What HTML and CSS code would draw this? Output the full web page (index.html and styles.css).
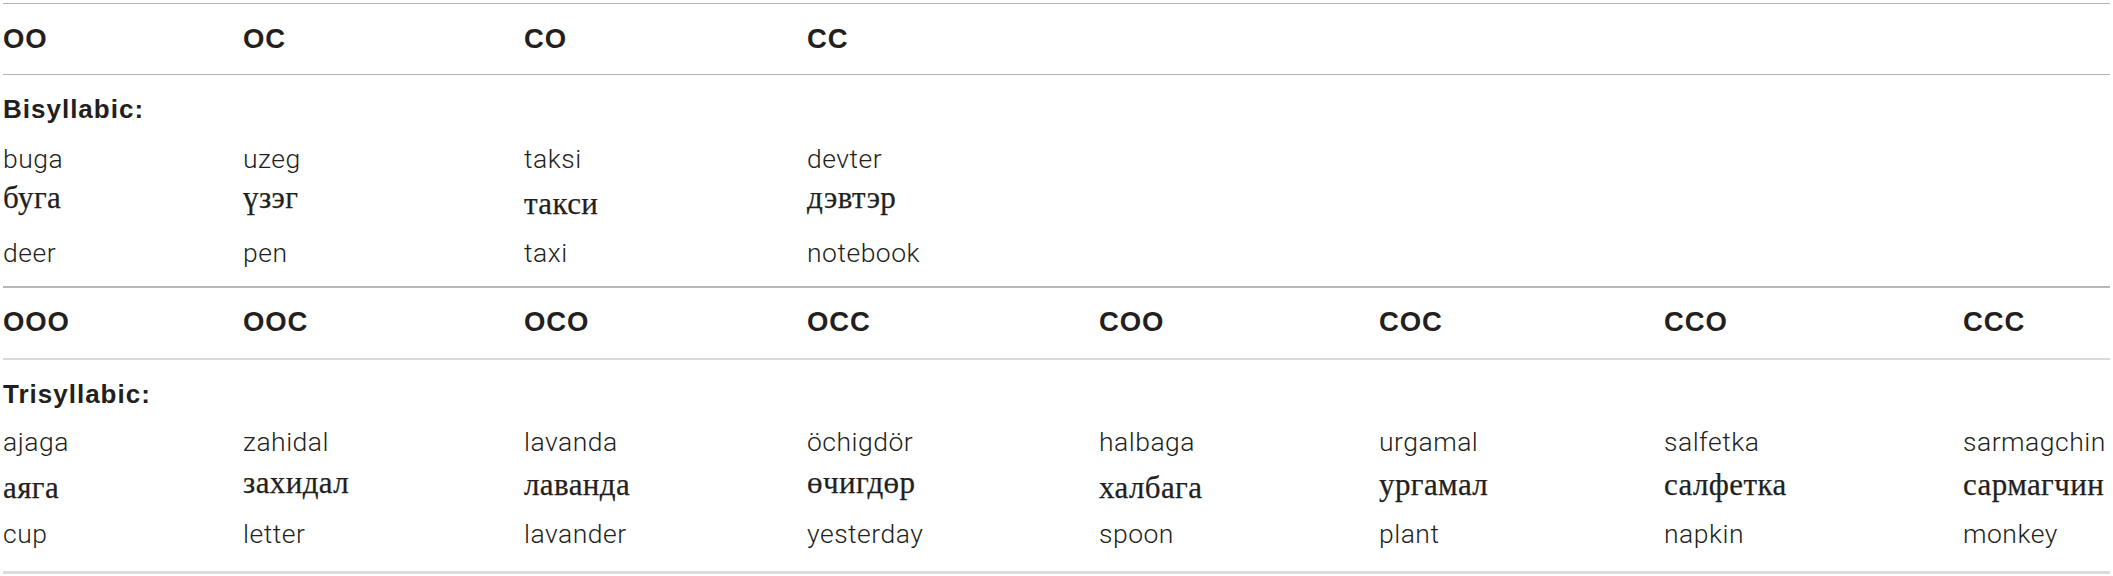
FILE: index.html
```html
<!DOCTYPE html>
<html lang="en">
<head>
<meta charset="utf-8">
<title>Syllable structure stimuli</title>
<link rel="stylesheet" href="styles.css">
</head>
<body>
<div class="table">
  <section class="block block-bi">
    <div class="row row-head">
      <div class="cell">OO</div>
      <div class="cell">OC</div>
      <div class="cell">CO</div>
      <div class="cell">CC</div>
    </div>
    <div class="row row-label">
      <div class="cell cell-wide">Bisyllabic:</div>
    </div>
    <div class="row row-lat">
      <div class="cell">buga</div>
      <div class="cell">uzeg</div>
      <div class="cell">taksi</div>
      <div class="cell">devter</div>
    </div>
    <div class="row row-cyr">
      <div class="cell">буга</div>
      <div class="cell">үзэг</div>
      <div class="cell shift-6">такси</div>
      <div class="cell">дэвтэр</div>
    </div>
    <div class="row row-lat row-gloss">
      <div class="cell">deer</div>
      <div class="cell">pen</div>
      <div class="cell">taxi</div>
      <div class="cell">notebook</div>
    </div>
  </section>
  <section class="block block-tri">
    <div class="row row-head">
      <div class="cell">OOO</div>
      <div class="cell">OOC</div>
      <div class="cell">OCO</div>
      <div class="cell">OCC</div>
      <div class="cell">COO</div>
      <div class="cell">COC</div>
      <div class="cell">CCO</div>
      <div class="cell">CCC</div>
    </div>
    <div class="row row-label">
      <div class="cell cell-wide">Trisyllabic:</div>
    </div>
    <div class="row row-lat">
      <div class="cell">ajaga</div>
      <div class="cell">zahidal</div>
      <div class="cell">lavanda</div>
      <div class="cell">öchigdör</div>
      <div class="cell">halbaga</div>
      <div class="cell">urgamal</div>
      <div class="cell">salfetka</div>
      <div class="cell">sarmagchin</div>
    </div>
    <div class="row row-cyr">
      <div class="cell shift-5">аяга</div>
      <div class="cell">захидал</div>
      <div class="cell shift-2">лаванда</div>
      <div class="cell">өчигдөр</div>
      <div class="cell shift-5">халбага</div>
      <div class="cell shift-2">ургамал</div>
      <div class="cell shift-2">салфетка</div>
      <div class="cell shift-2">сармагчин</div>
    </div>
    <div class="row row-lat row-gloss">
      <div class="cell">cup</div>
      <div class="cell">letter</div>
      <div class="cell">lavander</div>
      <div class="cell">yesterday</div>
      <div class="cell">spoon</div>
      <div class="cell">plant</div>
      <div class="cell">napkin</div>
      <div class="cell">monkey</div>
    </div>
  </section>
</div>
</body>
</html>
```

FILE: styles.css
```css
html, body {
  margin: 0;
  padding: 0;
  background: #ffffff;
  overflow: hidden;
}

body {
  color: #231f20;
  font-family: "Liberation Sans", Arial, sans-serif;
}

.table {
  margin: 3px 3px 0 3px;
  border-top: 1px solid #b4b4b4;
}

.row {
  display: grid;
  grid-template-columns: 240px 281px 283px 292px 280px 285px 299px 1fr;
}

.cell {
  white-space: nowrap;
}

.cell-wide {
  grid-column: 1 / -1;
}

.row-head {
  font-family: "Liberation Sans", Arial, sans-serif;
  font-weight: 700;
  font-size: 27.5px;
  letter-spacing: 0.9px;
  line-height: 70px;
  border-bottom: 1px solid #b4b4b4;
}

.row-label {
  font-family: "Liberation Sans", Arial, sans-serif;
  font-weight: 700;
  font-size: 26px;
  letter-spacing: 1px;
  line-height: 32px;
  padding-top: 18px;
}

.row-lat {
  font-family: "Roboto", "Liberation Sans", sans-serif;
  font-weight: 300;
  font-size: 26.5px;
  letter-spacing: 0.5px;
  line-height: 34px;
  padding-top: 17px;
}

.row-cyr {
  font-family: "Liberation Serif", "Times New Roman", serif;
  font-weight: 400;
  font-size: 31px;
  letter-spacing: 0.4px;
  line-height: 36px;
  height: 36px;
  padding-top: 4px;
  -webkit-text-stroke: 0.25px #231f20;
}

.row-gloss {
  padding-top: 20px;
}

.shift-2 { padding-top: 2px; }
.shift-5 { padding-top: 5px; }
.shift-6 { padding-top: 6px; }

.block-bi {
  padding-bottom: 16px;
  border-bottom: 2px solid #b8b8b8;
}

.block-tri .row-head {
  line-height: 68px;
  padding-bottom: 2px;
  border-bottom: 2px solid #d9d9d9;
}

.block-tri .row-lat {
  padding-top: 15px;
}

.block-tri .row-cyr {
  padding-top: 6px;
}

.block-tri .row-gloss {
  padding-top: 16px;
}

.block-tri {
  padding-bottom: 20px;
  border-bottom: 3px solid #dcdcdc;
}
```
